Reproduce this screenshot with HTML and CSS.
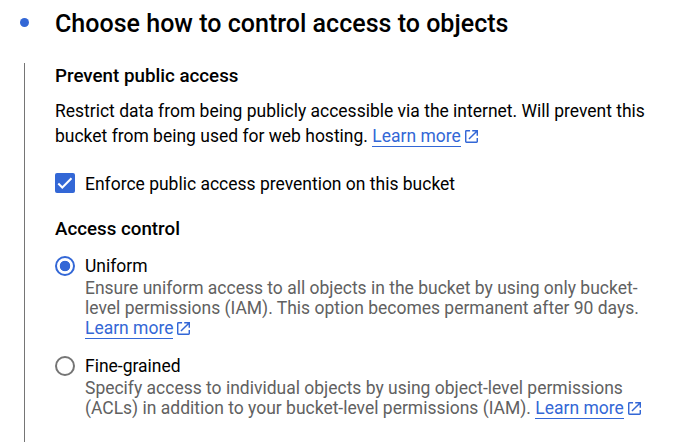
FILE: index.html
```html
<!DOCTYPE html>
<html lang="en">
<head>
<meta charset="utf-8">
<title>Create a bucket</title>
<link rel="stylesheet" href="styles.css">
</head>
<body>
<svg class="defs" width="0" height="0"><symbol id="ext" viewBox="0 0 18 18"><path d="M16 16H2V2h5V0H2a2 2 0 0 0-2 2v14a2 2 0 0 0 2 2h14a2 2 0 0 0 2-2v-5h-2v5zM10 0v2h4.59l-9.83 9.83 1.41 1.41L16 3.41V8h2V0h-8z" fill="currentColor"/></symbol></svg>
<main class="step">
  <header class="head"><span class="dot"></span><h1>Choose how to control access to objects</h1></header>
  <div class="content">
    <h2>Prevent public access</h2>
    <p class="intro">Restrict data from being publicly accessible via the internet. Will prevent this<br>bucket from being used for web hosting. <a href="#">Learn more</a><svg class="ext"><use href="#ext"/></svg></p>
    <label class="check"><svg class="box" viewBox="0 0 20 20"><rect width="20" height="20" rx="2" fill="#3367d6"/><path d="M3.3 10.5l4 4 9.2-9.2" fill="none" stroke="#fff" stroke-width="2"/></svg><span>Enforce public access prevention on this bucket</span></label>
    <h2 class="access">Access control</h2>
    <div class="option"><span class="radio on"></span><div><div class="name">Uniform</div><p>Ensure uniform access to all objects in the bucket by using only bucket-<br>level permissions (IAM). This option becomes permanent after 90 days.<br><a href="#">Learn more</a><svg class="ext"><use href="#ext"/></svg></p></div></div>
    <div class="option"><span class="radio"></span><div><div class="name">Fine-grained</div><p>Specify access to individual objects by using object-level permissions<br>(ACLs) in addition to your bucket-level permissions (IAM). <a href="#">Learn more</a><svg class="ext"><use href="#ext"/></svg></p></div></div>
  </div>
</main>
</body>
</html>
```
FILE: styles.css
```css
* { box-sizing: border-box; }
body { margin: 0; background: #fff; color: #000; font: 17.49px/20px Roboto, sans-serif; overflow: hidden; white-space: nowrap; }
.defs { display: block; }
.step { height: 442px; }
.head { display: flex; align-items: center; height: 45px; padding-left: 20px; gap: 26px; }
.dot { width: 9px; height: 9px; border-radius: 50%; background: #3367d6; }
h1 { margin: 0; padding-top: 3px; font-size: 25.05px; font-weight: 500; line-height: 30px; }
.content { height: 379px; margin: 18px 0 0 24px; padding: 1px 0 0 30px; border-left: 1px solid #757575; }
h2 { margin: 0; font-size: 18.75px; font-weight: 500; line-height: 25px; }
p { margin: 0; }
.intro { margin-top: 10px; line-height: 25px; }
.check { display: flex; gap: 10px; margin: 24px 0 24px; height: 20px; }
.check span { padding-top: 1px; }
.box { width: 20px; height: 20px; }
a { color: #3367d6; text-decoration: none; border-bottom: 1px solid #3367d6; }
.ext { width: 13px; height: 13px; margin-left: 4px; color: #3367d6; vertical-align: -1px; }
.option { display: flex; gap: 10px; margin-top: 18px; }
.access + .option { margin-top: 14px; }
.option p { color: #616161; }
.name { height: 22px; }
.radio { width: 20px; height: 20px; border: 2px solid #757575; border-radius: 50%; }
.radio.on { border-color: #3367d6; background: radial-gradient(circle, #3367d6 0 4.9px, transparent 5.6px); }
```
